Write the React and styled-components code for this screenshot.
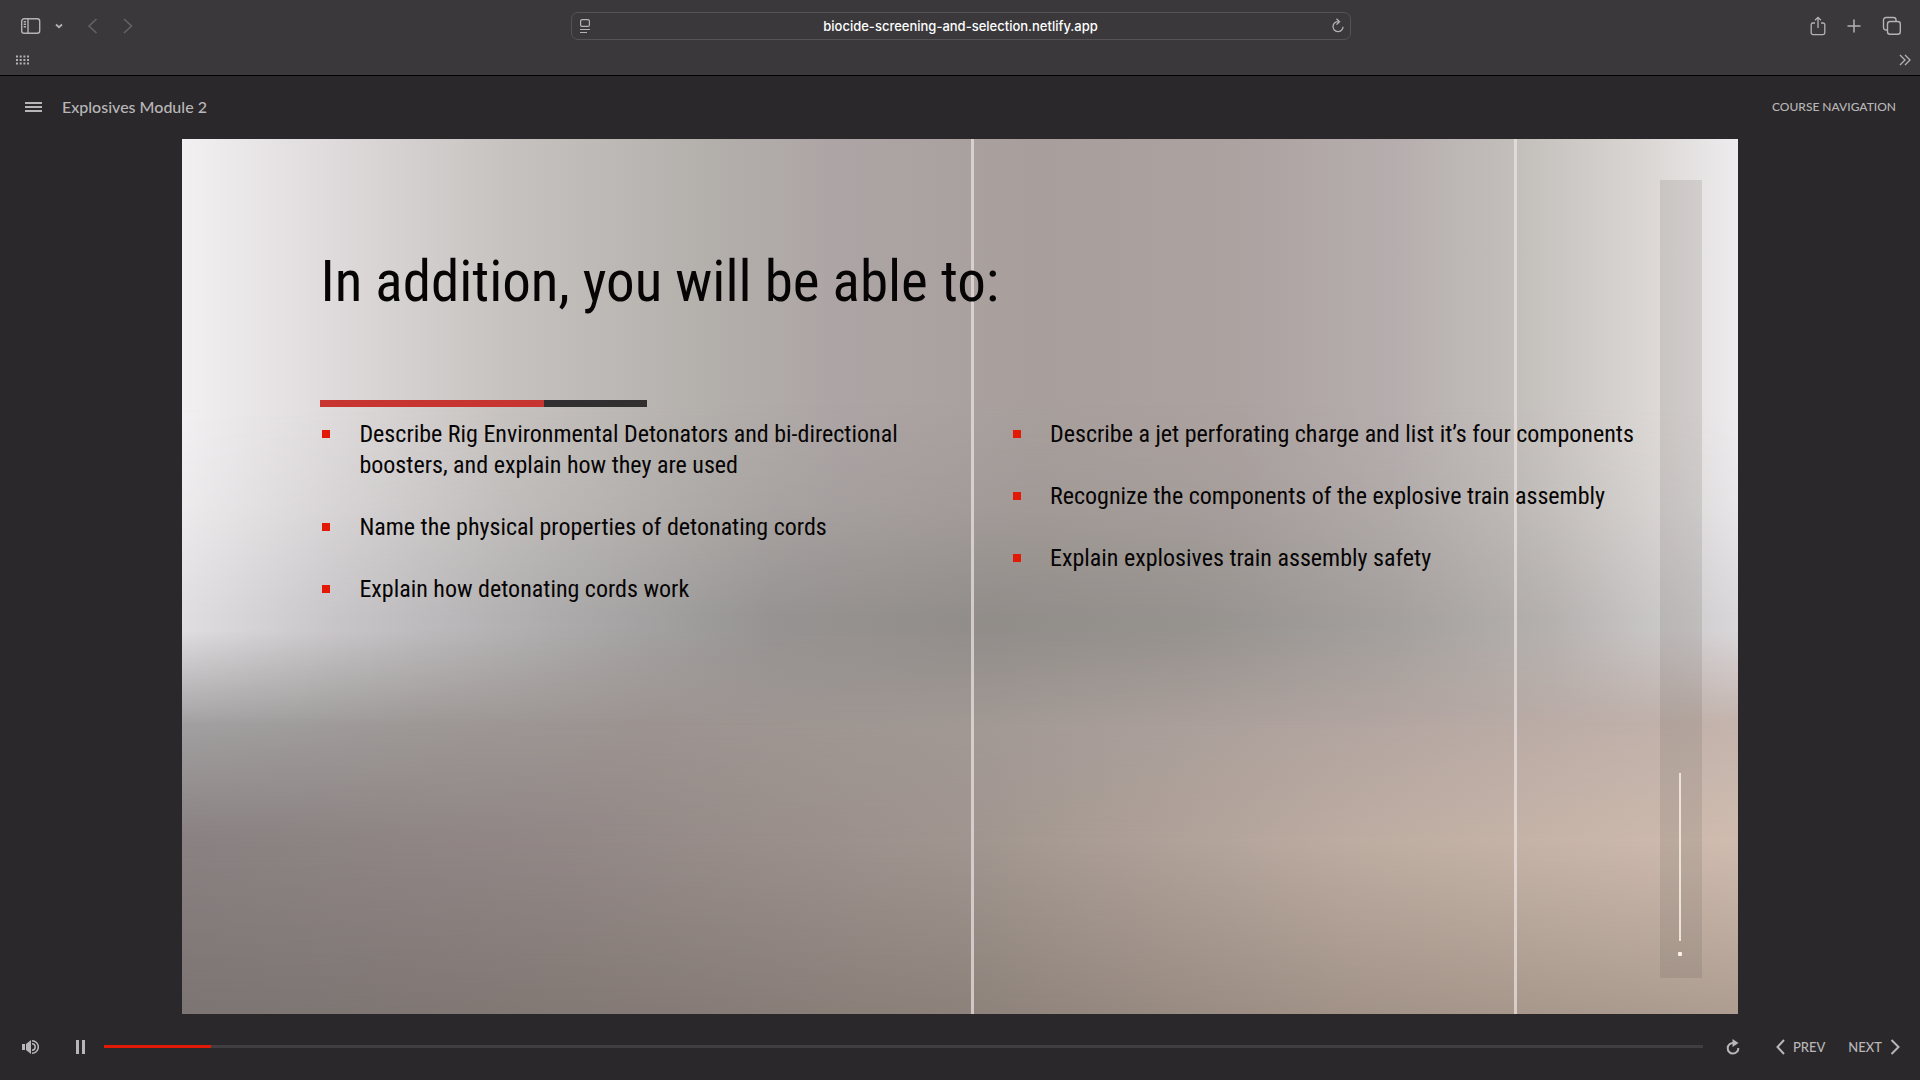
// Libs
import { useState } from "react";

// Styles
import styled, { createGlobalStyle } from "styled-components";

const GlobalStyle = createGlobalStyle`
  * {
    box-sizing: border-box;
  }

  body {
    margin: 0;
    background: #2a282a;
    font-family: Lato, sans-serif;
  }

  button {
    display: flex;
    align-items: center;
    padding: 0;
    border: 0;
    background: none;
    color: inherit;
    font: inherit;
    cursor: pointer;
  }

  svg {
    display: block;
    flex: none;
  }
`;

const Page = styled.div`
  display: flex;
  flex-direction: column;
  min-height: 100vh;
`;

const BrowserBar = styled.header`
  background: #3a383b;
  border-bottom: 1px solid #000;
  color: #b4b2b4;
`;

const Toolbar = styled.div`
  display: grid;
  grid-template-columns: 1fr 780px 1fr;
  align-items: center;
  height: 52px;
  padding: 0 18px 0 19px;
`;

const ToolGroup = styled.div`
  display: flex;
  align-items: center;
  justify-content: ${({ $end }) => ($end ? "flex-end" : "flex-start")};
  gap: ${({ $end }) => ($end ? "20px" : "14px")};
`;

const NavArrows = styled.div`
  display: flex;
  gap: 24px;
  margin-left: 9px;
  color: #646265;
`;

const AddressBar = styled.div`
  display: flex;
  align-items: center;
  height: 28px;
  padding: 0 5px 0 7px;
  border: 1px solid #555356;
  border-radius: 7px;
`;

const AddressInput = styled.input`
  flex: 1;
  min-width: 0;
  padding: 0;
  border: 0;
  outline: 0;
  background: none;
  color: #fff;
  font: 500 13px/16px Inter, sans-serif;
  text-align: center;
`;

const Favorites = styled.div`
  display: flex;
  align-items: center;
  justify-content: space-between;
  height: 23px;
  padding: 0 9px 7px 15px;
`;

const PlayerTop = styled.div`
  display: flex;
  align-items: center;
  justify-content: space-between;
  height: 63px;
  padding: 0 24px 1px;
  color: #b8b6b8;
`;

const CourseTitle = styled.div`
  display: flex;
  align-items: center;
  gap: 20px;

  h1 {
    margin: 0;
    font-size: 16px;
    font-weight: 500;
    line-height: 20px;
  }
`;

const NavLink = styled.button`
  gap: 8px;
  font-size: ${({ $step }) => ($step ? "13px" : "12px")};
  font-weight: 500;
  line-height: 16px;
`;

const Slide = styled.main`
  position: relative;
  width: 81%;
  aspect-ratio: 16 / 9;
  margin: 0 auto;
  overflow: hidden;
  color: #060404;
  font-family: "Roboto Condensed", "Liberation Sans Narrow", sans-serif;
`;

// one horizontal sweep of light, fading out over what lies beneath it
const Band = styled.div`
  position: absolute;
  inset: 0;
  background: linear-gradient(90deg, ${({ $colors }) => $colors});
  mask-image: linear-gradient(${({ $fade }) => $fade});
`;

const Seam = styled.div`
  position: absolute;
  top: 0;
  bottom: 0;
  left: ${({ $left }) => $left};
  width: 3px;
  background: rgba(236, 228, 226, 0.7);
`;

const SidePanel = styled.div`
  position: absolute;
  top: 41px;
  right: 36px;
  bottom: 36px;
  display: flex;
  flex-direction: column;
  align-items: center;
  justify-content: flex-end;
  gap: 11px;
  width: 42px;
  padding: 0 2px 22px 0;
  background: rgba(90, 78, 76, 0.15);

  &::before {
    content: "";
    width: 2px;
    height: 168px;
    background: #eee3da;
  }

  &::after {
    content: "";
    width: 4px;
    height: 4px;
    border-radius: 1px;
    background: #fbf2ea;
  }
`;

const SlideContent = styled.div`
  position: relative;
  padding: 107px 84px 0 138px;
`;

const Heading = styled.h2`
  margin: 0;
  font-size: 57px;
  font-weight: 400;
  line-height: 72px;
`;

const Rule = styled.div`
  width: 327px;
  height: 7px;
  margin: 82px 0 12px;
  background: linear-gradient(90deg, #c6352f 224px, #322f30 224px);
`;

const Columns = styled.div`
  display: grid;
  grid-template-columns: 1fr 1fr;
  gap: 48px;
`;

const Bullets = styled.ul`
  display: flex;
  flex-direction: column;
  gap: 31px;
  margin: 0;
  padding: 0;
  list-style: none;
`;

const Bullet = styled.li`
  display: flex;
  gap: 29px;
  font-size: 24px;
  line-height: 31px;

  &::before {
    content: "";
    flex: none;
    width: 8px;
    height: 8px;
    margin: 11px 0 0 2px;
    background: #e21a05;
  }
`;

const PlayerBottom = styled.footer`
  display: flex;
  align-items: center;
  height: 66px;
  padding: 0 20px 0 22px;
  color: #b8b6b8;
`;

const PlayButton = styled.button`
  margin: 0 19px 0 37px;
`;

const Seek = styled.input`
  flex: 1;
  min-width: 0;
  height: 3px;
  margin: 0 23px 0 0;
  appearance: none;
  background: linear-gradient(
    90deg,
    #e21a05 ${({ value }) => value}%,
    #403e40 ${({ value }) => value}%
  );

  &::-webkit-slider-thumb {
    appearance: none;
    width: 0;
    height: 0;
  }
`;

const StepButtons = styled.div`
  display: flex;
  gap: 23px;
  margin-left: 36px;
`;

const bands = [
  {
    colors: "#7c7573, #837975 25%, #8d827b 50%, #a29388 75%, #ae9d91",
    fade: "#000, #000",
  },
  {
    colors: "#8a8182, #928886 25%, #a0958f 50%, #bdaca1 75%, #d0bcaf",
    fade: "#000 80%, transparent 100%",
  },
  {
    colors: "#a3a2a3, #9e9997 15%, #9d9491 30%, #a19894 50%, #b1a4a0 75%, #c3b3ac",
    fade: "#000 66%, transparent 80%",
  },
  {
    colors:
      "#e0dee0, #c8c5c8 10%, #adabac 24%, #969392 38%, #918d89 52%, #96928e 65%, #a4a09d 78%, #b5b1af 88%, #dad7da",
    fade: "#000 56%, transparent 67%",
  },
  {
    colors:
      "#f3f0f2, #dedadb 10%, #c6c2bf 21%, #b3afab 34%, #ada5a5 42%, #a89f9c 55%, #aca2a0 68%, #b6aeae 78%, #c3bfbb 86%, #dad6d3 94%, #efecef",
    fade: "#000 30%, rgba(0, 0, 0, 0.7) 42%, transparent 55%",
  },
];

const leftItems = [
  "Describe Rig Environmental Detonators and bi-directional boosters, and explain how they are used",
  "Name the physical properties of detonating cords",
  "Explain how detonating cords work",
];

const rightItems = [
  "Describe a jet perforating charge and list it’s four components",
  "Recognize the components of the explosive train assembly",
  "Explain explosives train assembly safety",
];

function Icon({ w, h, stroke = 1.5, children }) {
  return (
    <svg
      width={w}
      height={h}
      viewBox={`0 0 ${w} ${h}`}
      fill="none"
      stroke="currentColor"
      strokeWidth={stroke}
      aria-hidden="true"
    >
      {children}
    </svg>
  );
}

function Browser() {
  return (
    <BrowserBar>
      <Toolbar>
        <ToolGroup>
          <button aria-label="Show sidebar">
            <Icon w={22} h={18} stroke={1.4}>
              <rect x="2.700" y="1.700" width="18" height="14.600" rx="2.500" />
              <path d="M9 2v14M4.700 4.700h2.300M4.700 7.200h2.300M4.700 9.700h2.300" />
            </Icon>
          </button>
          <button aria-label="Tab groups">
            <Icon w={8} h={6} stroke={1.8}>
              <path d="M1 1.500l3 2.700 3-2.700" />
            </Icon>
          </button>
          <NavArrows>
            <button aria-label="Back">
              <Icon w={12} h={18} stroke={1.6}>
                <path d="M10.500 2L3 9l7.500 7" />
              </Icon>
            </button>
            <button aria-label="Forward">
              <Icon w={12} h={18} stroke={1.6}>
                <path d="M2 2l7.500 7L2 16" />
              </Icon>
            </button>
          </NavArrows>
        </ToolGroup>

        <AddressBar>
          <button aria-label="Page menu">
            <Icon w={12} h={16} stroke={1.2}>
              <rect x="1.600" y="1.600" width="8.800" height="6.800" rx="1.500" />
              <path d="M1 11.500h10M1 14.500h7" />
            </Icon>
          </button>
          <AddressInput
            aria-label="Address"
            defaultValue="biocide-screening-and-selection.netlify.app"
          />
          <button aria-label="Reload">
            <Icon w={14} h={16} stroke={1.3}>
              <path d="M7.500 3.700A5 5 0 1 0 12 8.700M5.500 .8l3 2.900-3 2.900" />
            </Icon>
          </button>
        </AddressBar>

        <ToolGroup $end>
          <button aria-label="Share">
            <Icon w={16} h={20} stroke={1.3}>
              <path d="M5 7H3a1.800 1.800 0 0 0-1.800 1.800v8A1.800 1.800 0 0 0 3 18.600h10a1.800 1.800 0 0 0 1.800-1.800v-8A1.800 1.800 0 0 0 13 7h-2M8 12V1.500M5 4.300L8 1.300l3 3" />
            </Icon>
          </button>
          <button aria-label="New tab">
            <Icon w={16} h={16} stroke={1.5}>
              <path d="M8 1.500v13M1.500 8h13" />
            </Icon>
          </button>
          <button aria-label="Show all tabs">
            <Icon w={20} h={20} stroke={1.4}>
              <rect x="5.500" y="5.500" width="12.800" height="12.800" rx="2.500" />
              <path d="M5 14H4a2.500 2.500 0 0 1-2.500-2.500V4A2.500 2.500 0 0 1 4 1.500h7.500A2.500 2.500 0 0 1 14 4v1" />
            </Icon>
          </button>
        </ToolGroup>
      </Toolbar>

      <Favorites>
        <button aria-label="Favorites">
          <Icon w={14} h={10} stroke={2}>
            <path strokeDasharray="2 1.700" d="M1 1.500h13M1 5h13M1 8.500h13" />
          </Icon>
        </button>
        <button aria-label="More">
          <Icon w={12} h={12} stroke={1.3}>
            <path d="M1 1l5 5-5 5M6 1l5 5-5 5" />
          </Icon>
        </button>
      </Favorites>
    </BrowserBar>
  );
}

function BulletList({ items }) {
  return (
    <Bullets>
      {items.map(item => (
        <Bullet key={item}>{item}</Bullet>
      ))}
    </Bullets>
  );
}

function App() {
  const [progress, setProgress] = useState(6.7);

  return (
    <Page>
      <GlobalStyle />
      <Browser />

      <PlayerTop>
        <CourseTitle>
          <button aria-label="Menu">
            <Icon w={18} h={12} stroke={2}>
              <path d="M1 2h17M1 6h17M1 10h17" />
            </Icon>
          </button>
          <h1>Explosives Module 2</h1>
        </CourseTitle>
        <NavLink>COURSE NAVIGATION</NavLink>
      </PlayerTop>

      <Slide>
        {bands.map(band => (
          <Band key={band.fade} $colors={band.colors} $fade={band.fade} />
        ))}
        <Seam $left="50.7%" />
        <Seam $left="85.6%" />
        <SidePanel />

        <SlideContent>
          <Heading>In addition, you will be able to:</Heading>
          <Rule />
          <Columns>
            <BulletList items={leftItems} />
            <BulletList items={rightItems} />
          </Columns>
        </SlideContent>
      </Slide>

      <PlayerBottom>
        <button aria-label="Volume">
          <Icon w={17} h={16} stroke={1.5}>
            <path
              d="M0 5h3v6H0zM4 5l5-4v14l-5-4z"
              fill="currentColor"
              stroke="none"
            />
            <path d="M10 1.700a6.300 6.300 0 0 1 0 12.600M10 4.800a3.200 3.200 0 0 1 0 6.400" />
          </Icon>
        </button>
        <PlayButton aria-label="Pause">
          <Icon w={9} h={14} stroke={3}>
            <path d="M1.500 0v14M7.500 0v14" />
          </Icon>
        </PlayButton>
        <Seek
          type="range"
          aria-label="Slide progress"
          min="0"
          max="100"
          step="0.1"
          value={progress}
          onChange={e => setProgress(Number(e.target.value))}
        />
        <button aria-label="Replay">
          <Icon w={14} h={16} stroke={2}>
            <path d="M7.500 4A5.300 5.300 0 1 0 12.300 9" />
            <path d="M6.500 0v8l6-4z" fill="currentColor" stroke="none" />
          </Icon>
        </button>
        <StepButtons>
          <NavLink $step>
            <Icon w={9} h={16} stroke={2}>
              <path d="M8 1L1.500 8 8 15" />
            </Icon>
            PREV
          </NavLink>
          <NavLink $step>
            NEXT
            <Icon w={10} h={16} stroke={2}>
              <path d="M1.500 1L8.500 8l-7 7" />
            </Icon>
          </NavLink>
        </StepButtons>
      </PlayerBottom>
    </Page>
  );
}

export default App;
